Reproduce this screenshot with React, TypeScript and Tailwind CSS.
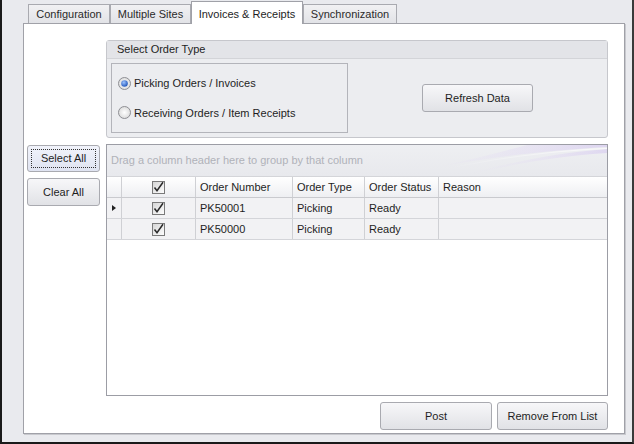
import React from "react";

const font = { fontFamily: '"Liberation Sans", Arial, sans-serif' };

function Check() {
  return (
    <svg width="13" height="13" viewBox="0 0 13 13">
      <defs>
        <linearGradient id="cb" x1="0" y1="0" x2="1" y2="1">
          <stop offset="0" stopColor="#d4d4d4" />
          <stop offset="1" stopColor="#ffffff" />
        </linearGradient>
      </defs>
      <rect x="0.5" y="0.5" width="12" height="12" fill="url(#cb)" stroke="#7a7a7a" />
      <path d="M2.5 6.5 L5 9.8 L11 1.2" fill="none" stroke="#2a2a2a" strokeWidth="1.5" />
    </svg>
  );
}

function Radio({ checked }: { checked?: boolean }) {
  return (
    <svg width="13" height="13" viewBox="0 0 13 13">
      <defs>
        <radialGradient id="rb" cx="0.5" cy="0.5" r="0.5">
          <stop offset="0" stopColor="#ffffff" />
          <stop offset="1" stopColor="#dcdcdc" />
        </radialGradient>
        <radialGradient id="rd" cx="0.4" cy="0.35" r="0.6">
          <stop offset="0" stopColor="#9cc3ff" />
          <stop offset="1" stopColor="#2c5fc0" />
        </radialGradient>
      </defs>
      <circle cx="6.5" cy="6.5" r="6" fill="url(#rb)" stroke="#8e8f94" />
      {checked && <circle cx="6.5" cy="6.5" r="3.3" fill="url(#rd)" />}
    </svg>
  );
}

function Btn({ children, className = "", focused = false }: { children: React.ReactNode; className?: string; focused?: boolean }) {
  return (
    <div
      className={`flex items-center justify-center rounded-[3px] border border-[#a9aab0] text-[11px] text-[#1e1e1e] ${
        focused ? "bg-gradient-to-b from-[#f1f3fb] to-[#dfe3f1]" : "bg-gradient-to-b from-[#f7f7f9] to-[#e1e2e6]"
      } ${className}`}
    >
      {focused ? (
        <div className="m-[3px] flex h-[calc(100%-6px)] w-[calc(100%-6px)] items-center justify-center border border-dotted border-[#333]">
          {children}
        </div>
      ) : (
        children
      )}
    </div>
  );
}

function Tab({ label, active, w }: { label: string; active?: boolean; w: string }) {
  return active ? (
    <div className={`relative z-10 -mb-px flex h-[23px] ${w} items-start justify-center border border-b-0 border-[#a0a1a8] bg-white pt-[4px] text-[11px] text-[#1e1e1e]`}>
      {label}
    </div>
  ) : (
    <div className={`flex h-[19px] ${w} items-center justify-center border border-b-0 border-[#a9aab0] bg-gradient-to-b from-[#f1f1f3] to-[#e2e3e7] text-[11px] text-[#2a2a2a]`}>
      {label}
    </div>
  );
}

const cell = "border-r border-[#cfd0d4] px-[4px] flex items-center";

function Row({ num, focused }: { num: string; focused?: boolean }) {
  return (
    <div className="flex h-[21px] border-b border-[#d4d5d9] text-[11px] text-[#1e1e1e]">
      <div className="flex w-[15px] items-center justify-center border-r border-[#cfd0d4]">
        {focused && <div className="h-0 w-0 border-y-[3.5px] border-l-[4px] border-y-transparent border-l-[#222]" />}
      </div>
      <div className={`${cell} w-[74px] justify-center`}>
        <Check />
      </div>
      <div className={`${cell} w-[97px]`}>{num}</div>
      <div className={`${cell} w-[72px]`}>Picking</div>
      <div className={`${cell} w-[74px]`}>Ready</div>
      <div className="flex-1" />
    </div>
  );
}

export default function App() {
  return (
    <div style={font} className="flex h-[444px] w-[634px] flex-col border-b-2 border-l-2 border-r-2 border-b-[#1a1a1a] border-l-[#1a1a1a] border-r-[#3a3a3a] bg-[#e9eaee] pl-[21px]">
      {/* tabs */}
      <div className="flex h-[23px] items-end pl-[5px]">
        <Tab label="Configuration" w="w-[82px]" />
        <Tab label="Multiple Sites" w="w-[81px]" />
        <Tab label="Invoices & Receipts" w="w-[112px]" active />
        <Tab label="Synchronization" w="w-[94px]" />
      </div>
      {/* panel */}
      <div className="flex h-[411px] w-[602px] border border-[#a0a1a8] bg-white pt-[16px] shadow-[1px_1px_0_#c8c9ce]">
        {/* left column */}
        <div className="flex w-[82px] flex-col gap-[6px] pl-[3px] pt-[105px]">
          <Btn focused className="h-[27px] w-[73px]">Select All</Btn>
          <Btn className="h-[28px] w-[73px]">Clear All</Btn>
        </div>
        {/* right column */}
        <div className="flex w-[502px] flex-col">
          {/* group box */}
          <div className="flex h-[98px] flex-col rounded-[3px] border border-[#c6c7cc] bg-[#ecedf0]">
            <div className="flex h-[18px] items-center border-b border-[#d3d4d8] bg-[#e3e4e8] pl-[10px] text-[11px] text-[#1e1e1e]">
              Select Order Type
            </div>
            <div className="flex flex-1 items-center pl-[4px]">
              <div className="flex h-[70px] w-[237px] flex-col justify-center gap-[13px] border border-[#b3b4ba] pl-[6px] text-[11px] text-[#1e1e1e]">
                <div className="flex items-center gap-[3px]">
                  <Radio checked />
                  Picking Orders / Invoices
                </div>
                <div className="flex items-center gap-[3px]">
                  <Radio />
                  Receiving Orders / Item Receipts
                </div>
              </div>
              <div className="flex flex-1 justify-center">
                <Btn className="h-[28px] w-[111px]">Refresh Data</Btn>
              </div>
            </div>
          </div>
          {/* grid */}
          <div className="mt-[6px] flex h-[252px] flex-col border border-[#9c9da5] bg-white">
            <div className="relative flex h-[32px] items-center overflow-hidden border-b border-[#d4d5d9] bg-gradient-to-b from-[#eeeff2] to-[#e8e9ed] pl-[4px] text-[11px] text-[#b0b2b9]">
              Drag a column header here to group by that column
              <svg className="absolute right-0 top-0" width="200" height="32" viewBox="0 0 200 32">
                <defs>
                  <linearGradient id="sw" x1="0" y1="0" x2="1" y2="0">
                    <stop offset="0" stopColor="#e6def5" stopOpacity="0" />
                    <stop offset="0.6" stopColor="#dccff3" stopOpacity="0.6" />
                    <stop offset="1" stopColor="#cdbcef" stopOpacity="0.9" />
                  </linearGradient>
                  <linearGradient id="sw2" x1="0" y1="0" x2="1" y2="0">
                    <stop offset="0" stopColor="#ffffff" stopOpacity="0" />
                    <stop offset="1" stopColor="#ffffff" stopOpacity="0.7" />
                  </linearGradient>
                </defs>
                <path d="M10 26 C 70 14, 130 6, 200 2 L200 0 L120 0 C 90 8, 50 18, 10 26 Z" fill="url(#sw)" opacity="0.55" />
                <path d="M60 30 C 110 18, 160 10, 200 8 L200 4 C 150 8, 110 16, 60 29 Z" fill="url(#sw)" opacity="0.5" />
                <path d="M40 24 C 100 12, 150 6, 200 4 L200 3 C 150 5, 100 11, 40 23 Z" fill="url(#sw2)" />
              </svg>
            </div>
            <div className="flex h-[21px] border-b border-[#c9cace] bg-gradient-to-b from-[#ffffff] to-[#eeeff2] text-[11px] text-[#1e1e1e]">
              <div className="w-[15px] border-r border-[#cfd0d4]" />
              <div className={`${cell} w-[74px] justify-center`}>
                <Check />
              </div>
              <div className={`${cell} w-[97px]`}>Order Number</div>
              <div className={`${cell} w-[72px]`}>Order Type</div>
              <div className={`${cell} w-[74px]`}>Order Status</div>
              <div className="flex flex-1 items-center px-[4px]">Reason</div>
            </div>
            <div className="bg-[#f2f2f4]">
              <Row num="PK50001" focused />
              <Row num="PK50000" />
            </div>
          </div>
          {/* bottom buttons */}
          <div className="mt-[6px] flex justify-end gap-[5px]">
            <Btn className="h-[28px] w-[112px]">Post</Btn>
            <Btn className="h-[28px] w-[111px]">Remove From List</Btn>
          </div>
        </div>
      </div>
    </div>
  );
}
